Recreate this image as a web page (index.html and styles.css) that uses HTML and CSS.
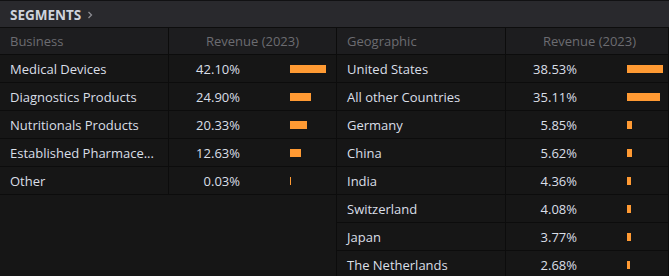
FILE: index.html
```html
<!DOCTYPE html>
<html>
<head>
<meta charset="utf-8">
<link rel="stylesheet" href="styles.css">
</head>
<body>
<div class="panel">
  <div class="title-bar">
    <span class="title">SEGMENTS</span>
    <svg class="chev" width="6" height="8" viewBox="0 0 6 8"><path d="M1.5 1 L4.5 4 L1.5 7" fill="none" stroke="#8c8c92" stroke-width="1.3"/></svg>
  </div>
  <div class="tables">
    <div class="seg-table">
      <div class="row head"><div class="c1">Business</div><div class="c2">Revenue (2023)</div></div>
      <div class="row"><div class="c1">Medical Devices</div><div class="c2"><span class="pct">42.10%</span><span class="bar" style="width:36px"></span></div></div>
      <div class="row"><div class="c1">Diagnostics Products</div><div class="c2"><span class="pct">24.90%</span><span class="bar" style="width:21.3px"></span></div></div>
      <div class="row"><div class="c1">Nutritionals Products</div><div class="c2"><span class="pct">20.33%</span><span class="bar" style="width:17.4px"></span></div></div>
      <div class="row"><div class="c1">Established Pharmace...</div><div class="c2"><span class="pct">12.63%</span><span class="bar" style="width:10.8px"></span></div></div>
      <div class="row"><div class="c1">Other</div><div class="c2"><span class="pct">0.03%</span><span class="bar" style="width:0.03px"></span></div></div>
    </div>
    <div class="seg-table right">
      <div class="row head"><div class="c1">Geographic</div><div class="c2">Revenue (2023)</div></div>
      <div class="row"><div class="c1">United States</div><div class="c2"><span class="pct">38.53%</span><span class="bar" style="width:36px"></span></div></div>
      <div class="row"><div class="c1">All other Countries</div><div class="c2"><span class="pct">35.11%</span><span class="bar" style="width:32.8px"></span></div></div>
      <div class="row"><div class="c1">Germany</div><div class="c2"><span class="pct">5.85%</span><span class="bar" style="width:5.47px"></span></div></div>
      <div class="row"><div class="c1">China</div><div class="c2"><span class="pct">5.62%</span><span class="bar" style="width:5.25px"></span></div></div>
      <div class="row"><div class="c1">India</div><div class="c2"><span class="pct">4.36%</span><span class="bar" style="width:4.07px"></span></div></div>
      <div class="row"><div class="c1">Switzerland</div><div class="c2"><span class="pct">4.08%</span><span class="bar" style="width:3.81px"></span></div></div>
      <div class="row"><div class="c1">Japan</div><div class="c2"><span class="pct">3.77%</span><span class="bar" style="width:3.52px"></span></div></div>
      <div class="row"><div class="c1">The Netherlands</div><div class="c2"><span class="pct">2.68%</span><span class="bar" style="width:2.5px"></span></div></div>
    </div>
  </div>
</div>
</body>
</html>
```
FILE: styles.css
```css
html, body {
  margin: 0;
  padding: 0;
  background: #161616;
}
body {
  font-family: "Open Sans", "Liberation Sans", sans-serif;
  font-size: 13px;
  color: #dadfe7;
}
.panel {
  width: 669px;
  height: 276px;
  overflow: hidden;
  background: #161616;
}
.title-bar {
  height: 25px;
  padding-top: 1px;
  border-top: 1px solid #111113;
  border-bottom: 1px solid #0d0d0d;
  background: #29292d;
  display: flex;
  align-items: center;
  padding-left: 10px;
  gap: 6px;
}
.title {
  font-weight: 700;
  font-size: 13.5px;
  color: #cfd3dc;
}
.chev {
  display: block;
  margin-top: 1px;
}
.tables {
  display: grid;
  grid-template-columns: 336px 333px;
  align-items: start;
}
.seg-table.right {
  border-left: 1px solid #0c0c0c;
  border-right: 1px solid #0c0c0c;
  min-height: 260px;
}
.row {
  display: grid;
  grid-template-columns: 169px 1fr;
  height: 26px;
  padding-top: 1px;
  line-height: 26px;
  border-bottom: 1px solid #0c0c0c;
  background: #161616;
}
.row.head {
  height: 26px;
  padding-top: 0;
  line-height: 26px;
  background: #1d1d1f;
  color: #6c6c71;
}
.c1 {
  border-right: 1px solid #0c0c0c;
  margin-top: -1px;
  padding: 1px 8px 0 10px;
  white-space: nowrap;
  overflow: hidden;
}
.head .c1 {
  margin-top: 0;
  padding-top: 0;
}
.c2 {
  display: flex;
  align-items: center;
}
.head .c2 {
  justify-content: center;
}
.right .head .c2 {
  padding-left: 5px;
}
.pct {
  width: 71px;
  text-align: right;
  flex: none;
}
.bar {
  margin-left: 50px;
  margin-top: -1px;
  height: 8px;
  min-width: 1px;
  background: #ff9a33;
  flex: none;
}
```
